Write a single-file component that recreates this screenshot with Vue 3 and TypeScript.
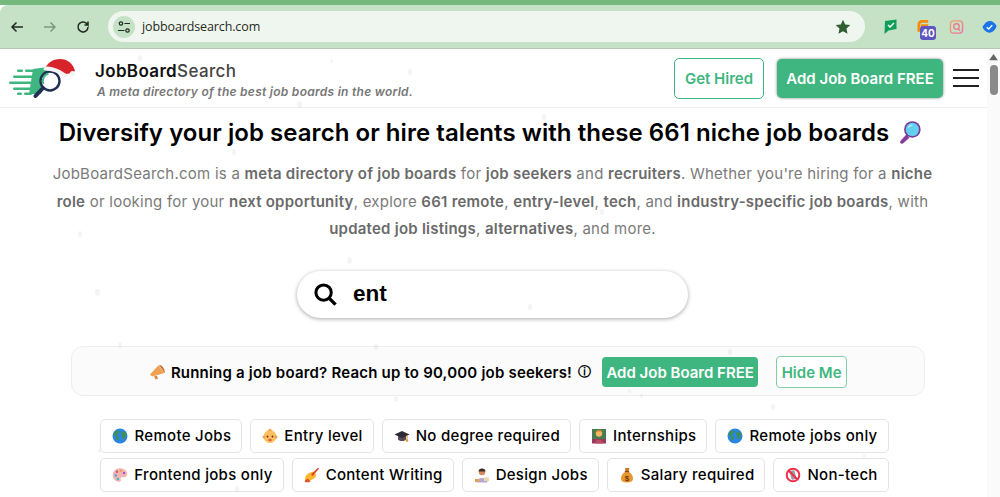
<template>
  <div class="screen">
    <svg class="defs" width="0" height="0" aria-hidden="true">
      <symbol id="globe" viewBox="0 0 16 16">
        <circle cx="8" cy="8" r="7.5" fill="#2a86e0" />
        <path d="M3 3.500c2-1.500 4-1 5-.5L7 5 5 5.500 5.500 8 7 9.500 6 13 4 11 3.500 8 1.500 7C1.500 6 2 4.500 3 3.500z" fill="#3f8f5a" />
        <path d="M10 4l3-.5 1.500 3-1 2-1.500 3-1.500-1-.5-3-1-1.500z" fill="#3f8f5a" />
      </symbol>
      <symbol id="baby" viewBox="0 0 16 16">
        <circle cx="8" cy="8.500" r="6.500" fill="#ffbf5f" />
        <circle cx="2" cy="9" r="1.500" fill="#f0a04a" />
        <circle cx="14" cy="9" r="1.500" fill="#f0a04a" />
        <path d="M6 2.500C7 .5 9 .5 10 2.500z" fill="#e8923a" />
        <circle cx="5.500" cy="8.500" r=".9" fill="#4a3020" />
        <circle cx="10.500" cy="8.500" r=".9" fill="#4a3020" />
        <ellipse cx="8" cy="12" rx="1.800" ry="1.200" fill="#e0604a" />
      </symbol>
      <symbol id="cap" viewBox="0 0 16 16">
        <path d="M4 8v3.500c2 2 6 2 8 0V8z" fill="#5a4a55" />
        <path d="M.5 6.500L8 3l7.500 3.500L8 10z" fill="#2e2a38" />
        <path d="M13 7.500v4" stroke="#d88a2a" stroke-width="1" />
        <circle cx="13" cy="12.500" r="1.200" fill="#e8902a" />
      </symbol>
      <symbol id="teacher" viewBox="0 0 16 16">
        <rect x="1" y="1" width="14" height="11" fill="#4a7a50" />
        <rect x="1" y="11" width="14" height="4.500" fill="#9a3a5a" />
        <circle cx="8" cy="5.500" r="3.200" fill="#f5b860" />
        <path d="M4.500 5.500C4.500 1 11.500 1 11.500 5.500L10 3.800H6z" fill="#d88a2a" />
        <path d="M4 15.500c0-5 8-5 8 0z" fill="#c04a6a" />
      </symbol>
      <symbol id="palette" viewBox="0 0 16 16">
        <path d="M8 1.200C3.500 1.200.8 4.500.8 8.200c0 4 3.500 6.800 6.700 6.600 2-.2 1.300-2 1-3-.2-1 .7-1.600 1.800-1.500 2.500.3 5-.5 5-3.300C15.300 3.800 12 1.200 8 1.200z" fill="#f5b5b0" />
        <circle cx="5" cy="4.800" r="1.200" fill="#d84a8a" />
        <circle cx="8.800" cy="3.800" r="1.100" fill="#e8a030" />
        <circle cx="12" cy="6" r="1.200" fill="#9a5ad0" />
        <circle cx="3.800" cy="8.500" r="1.200" fill="#38a8e0" />
        <circle cx="5.800" cy="12" r="1.200" fill="#40b8c0" />
      </symbol>
      <symbol id="write" viewBox="0 0 16 16">
        <path d="M1 12c0-3 2-5 4-6l4-1.500 3 2.500c.5 3-2 5-4 5.500L5 14.500H1z" fill="#ffb52e" />
        <path d="M.5 15c2 .5 5 .5 6-.5L4 11.500 1.500 13z" fill="#e0562a" />
        <path d="M7 7.500L14 .8l1 1L8.500 9z" fill="#d8402a" />
      </symbol>
      <symbol id="designer" viewBox="0 0 16 16">
        <circle cx="8" cy="5" r="3.200" fill="#d8885a" />
        <path d="M4.500 4.500C4.500.5 11.500.5 11.500 4.500z" fill="#3a2a2a" />
        <path d="M2.500 15.500c0-6 11-6 11 0z" fill="#b8a8d8" />
        <rect x="10" y="10.500" width="5" height="3.500" fill="#e8d8a8" />
        <rect x="1" y="12" width="4" height="3" fill="#e8a050" />
      </symbol>
      <symbol id="money" viewBox="0 0 16 16">
        <path d="M6 1h4.500L9.500 4.500h-3z" fill="#c87a2a" />
        <path d="M6 5C3 7 1.800 9.500 2 12c.2 2.500 2.500 3.500 6 3.500s5.800-1 6-3.500c.2-2.500-1-5-4-7z" fill="#e8962e" />
        <rect x="5.800" y="3.800" width="4.400" height="1.400" fill="#8a4a1a" />
        <text x="8" y="13.500" font-size="8" font-weight="700" text-anchor="middle" fill="#6a3a10" font-family="Liberation Sans, sans-serif">$</text>
      </symbol>
      <symbol id="nosign" viewBox="0 0 16 16">
        <rect x="5.500" y="3.500" width="5" height="9" rx="1" fill="#9a9aa5" transform="rotate(-15 8 8)" />
        <circle cx="8" cy="8" r="6.300" fill="none" stroke="#f0304a" stroke-width="2" />
        <path d="M3.500 3.500l9 9" stroke="#f0304a" stroke-width="2" />
      </symbol>
      <symbol id="horn" viewBox="0 0 16 16">
        <path d="M9.500 1.200L15.500 9 3 12.500 1 10.500z" fill="#f0a050" />
        <path d="M10 1l5.700 8c.4-1.500-.3-4-1.700-5.800C12.800 1.500 11 .6 10 1z" fill="#c8702a" />
        <path d="M5 12.500l1.500 3 2.500-.8L8 11.500z" fill="#d88a4a" />
      </symbol>
      <symbol id="lens" viewBox="0 0 20 22">
        <path d="M7 12L1.800 18c-.8 1 .8 2.800 2 2l5.700-5z" fill="#8a3a9a" />
        <circle cx="12" cy="8" r="7" fill="#7a3a9a" />
        <circle cx="12" cy="8" r="5.600" fill="#62d0ee" />
        <path d="M8.500 6.500c.8-1.500 2-2.200 3.500-2.300" stroke="#b8ecf8" stroke-width="1.200" fill="none" />
      </symbol>
    </svg>

    <div class="browser-top"></div>
    <div class="toolbar">
      <div class="nav">
        <svg class="nav-icon" viewBox="0 0 16 16"><path d="M14 8H3M7.500 3.500L3 8l4.500 4.500" fill="none" stroke="#1f2a20" stroke-width="1.500" /></svg>
        <svg class="nav-icon" viewBox="0 0 16 16"><path d="M2 8h11M8.500 3.500L13 8l-4.500 4.500" fill="none" stroke="#7b9a7e" stroke-width="1.500" /></svg>
        <svg class="nav-icon" viewBox="0 0 16 16"><path d="M13 8a5 5 0 1 1-1.500-3.600L13 6V2.500M13 6H9.500" fill="none" stroke="#1f2a20" stroke-width="1.500" /></svg>
      </div>
      <div class="omnibox">
        <span class="site-badge">
          <svg viewBox="0 0 14 14" width="14" height="14"><circle cx="4" cy="3.500" r="1.700" fill="none" stroke="#1f2a20" stroke-width="1.200" /><path d="M7.500 3.500H13M1 10.500h6.500" stroke="#1f2a20" stroke-width="1.200" /><circle cx="10.500" cy="10.500" r="1.700" fill="none" stroke="#1f2a20" stroke-width="1.200" /></svg>
        </span>
        <span class="url">jobboardsearch.com</span>
        <svg class="star" viewBox="0 0 16 16"><path d="M8 .8l2.200 4.700 5.100.6-3.800 3.500 1 5.100L8 12.200l-4.500 2.500 1-5.100L.7 6.100l5.100-.6z" fill="#2f5f30" /></svg>
      </div>
      <div class="extensions">
        <svg class="ext" viewBox="0 0 14 16"><path d="M1.500 2L13 .5v9.500l-8 1.500L1 15z" fill="#0f9d58" /><path d="M4.500 6l2 2 4-4" fill="none" stroke="#fff" stroke-width="1.500" /></svg>
        <span class="ext-orange">
          <svg class="ext" viewBox="0 0 16 16"><path d="M3 13V5.500C3 3 4.500 2 6.500 2H13M6.500 8V6.500H13" fill="none" stroke="#f58a0c" stroke-width="2.800" /></svg>
          <span class="badge">40</span>
        </span>
        <svg class="ext" viewBox="0 0 16 16"><defs><linearGradient id="insta" x1="0" y1="0" x2="1" y2="1"><stop offset="0" stop-color="#f5a565" /><stop offset="1" stop-color="#ee6fa5" /></linearGradient></defs><rect x="1.500" y="1.500" width="13" height="13" rx="3.500" fill="none" stroke="url(#insta)" stroke-width="1.500" /><circle cx="8" cy="7.500" r="3" fill="none" stroke="#ec7a90" stroke-width="1.400" /><path d="M10 10l1.800 2" stroke="#ec7a90" stroke-width="1.400" /></svg>
        <svg class="ext" viewBox="0 0 16 16"><path d="M0.500 8c2-4 4.500-6 7.500-6.500 3-.2 6 2 7.500 5.500-1 4-4 6.800-7.500 7C5 14 2 11.500.5 8z" fill="#1a73e8" /><path d="M5 8.200l2.200 2L11 6" fill="none" stroke="#fff" stroke-width="1.500" /></svg>
      </div>
    </div>

    <div class="page">
      <div class="page-main">
        <header class="site-header">
          <svg class="logo" viewBox="0 0 68 46">
            <g fill="#3fb67f">
              <path d="M25 14L40 12 33 39H21z" />
              <rect x="9" y="14.500" width="6" height="2.400" rx="1.200" />
              <rect x="17" y="14.500" width="10" height="2.400" rx="1.200" />
              <rect x="5" y="20.500" width="22" height="2.400" rx="1.200" />
              <rect x="1" y="26.500" width="24" height="2.400" rx="1.200" />
              <rect x="5" y="32.500" width="20" height="2.400" rx="1.200" />
              <rect x="9" y="37.500" width="5" height="2.400" rx="1.200" />
              <rect x="16" y="37.500" width="8" height="2.400" rx="1.200" />
            </g>
            <circle cx="42" cy="26" r="9.500" fill="#fff" stroke="#1e2f52" stroke-width="2.400" />
            <path d="M35.500 29a7.500 7.500 0 0 1 5-10.500" fill="none" stroke="#3fb67f" stroke-width="2" />
            <path d="M35 33L27.500 41" stroke="#1e2f52" stroke-width="4" stroke-linecap="round" />
            <path d="M37 14C39 8 45 4 52 4c7 0 13 4 15 12l-3 2-6 1C52 16 44 14 37 14z" fill="#d8232a" />
            <path d="M35.500 14.500C35.500 12.500 37 11.500 39 11.500c7 .5 14 3.500 20 8 1 1.500-.5 3.500-2.500 2.500-6-4-13-6.500-19-6.500-1 0-2-.5-2-1z" fill="#f3f3f3" />
            <circle cx="64.500" cy="18.500" r="2.600" fill="#f3f3f3" />
          </svg>
          <div class="brand">
            <div class="brand-name">JobBoard<span>Search</span></div>
            <div class="brand-sub">A meta directory of the best job boards in the world.</div>
          </div>
          <div class="header-actions">
            <button class="btn-outline">Get Hired</button>
            <button class="btn-solid">Add Job Board FREE</button>
            <div class="burger"><i></i><i></i><i></i></div>
          </div>
        </header>

        <main class="content">
          <h1>
            Diversify your job search or hire talents with these 661 niche job boards
            <svg class="lens"><use href="#lens" /></svg>
          </h1>
          <p class="intro">
            JobBoardSearch.com is a <b>meta directory of job boards</b> for <b>job seekers</b> and <b>recruiters</b>. Whether you're hiring for a <b>niche role</b> or looking for your <b>next opportunity</b>, explore <b>661 remote</b>, <b>entry-level</b>, <b>tech</b>, and <b>industry-specific job boards</b>, with <b>updated job listings</b>, <b>alternatives</b>, and more.
          </p>

          <div class="search">
            <svg class="search-icon" viewBox="0 0 24 24"><circle cx="10" cy="10" r="8" fill="none" stroke="#000" stroke-width="3.200" /><path d="M16 16l6.500 6.500" stroke="#000" stroke-width="3.500" /></svg>
            <span>ent</span>
          </div>

          <div class="banner">
            <svg class="chip-icon"><use href="#horn" /></svg>
            <span class="banner-text">Running a job board? Reach up to 90,000 job seekers!</span>
            <span class="info">ⓘ</span>
            <button class="banner-add">Add Job Board FREE</button>
            <button class="banner-hide">Hide Me</button>
          </div>

          <div class="chips">
            <div v-for="chip in chips" :key="chip.label" class="chip">
              <svg class="chip-icon"><use :href="'#' + chip.icon" /></svg>
              {{ chip.label }}
            </div>
          </div>
        </main>

        <span
          v-for="(f, i) in flakes"
          :key="i"
          class="flake"
          :style="{ left: f[0] + 'px', top: f[1] + 'px', width: f[2] + 'px', height: f[2] * 1.400 + 'px' }"
        ></span>
      </div>
      <div class="scrollbar">
        <svg viewBox="0 0 10 8" width="9" height="7"><path d="M5 0l5 7H0z" fill="#666" /></svg>
        <div class="thumb"></div>
      </div>
    </div>
  </div>
</template>

<script setup lang="ts">
const chips = [
  { icon: 'globe', label: 'Remote Jobs' },
  { icon: 'baby', label: 'Entry level' },
  { icon: 'cap', label: 'No degree required' },
  { icon: 'teacher', label: 'Internships' },
  { icon: 'globe', label: 'Remote jobs only' },
  { icon: 'palette', label: 'Frontend jobs only' },
  { icon: 'write', label: 'Content Writing' },
  { icon: 'designer', label: 'Design Jobs' },
  { icon: 'money', label: 'Salary required' },
  { icon: 'nosign', label: 'Non-tech' }
]

// falling snow over the page: x, y (relative to the page area), size
const flakes: number[][] = [
  [138, 6, 4], [297, 52, 5], [232, 100, 4], [330, 10, 3], [342, 150, 4], [600, 160, 4], [408, 20, 4],
  [542, 65, 4], [690, 82, 4], [240, 145, 3], [78, 182, 4], [428, 170, 3], [528, 255, 4], [347, 208, 5],
  [95, 240, 5], [118, 293, 4], [176, 320, 4], [374, 295, 4], [728, 300, 4], [656, 325, 5], [628, 340, 3],
  [394, 347, 4], [204, 385, 4], [640, 345, 3], [771, 355, 4], [98, 400, 3], [863, 405, 3], [235, 437, 4]
]
</script>

<style>
html,
body {
  margin: 0;
  overflow: hidden;
}
</style>

<style scoped>
.screen {
  width: 1000px;
  height: 497px;
  overflow: hidden;
  display: flex;
  flex-direction: column;
  font-family: 'Inter', 'Liberation Sans', sans-serif;
  background: #fff;
  color: #000;
}

.defs {
  position: absolute;
}

.browser-top {
  height: 5px;
  background: #76b97e;
  flex-shrink: 0;
}

.toolbar {
  height: 44px;
  flex-shrink: 0;
  box-sizing: border-box;
  background: #c5e1c6;
  border-top-left-radius: 8px;
  border-bottom: 1px solid #b5c8b6;
  display: flex;
  align-items: center;
  padding: 0 0 0 9px;
}

.nav {
  display: flex;
  gap: 17px;
  width: 99px;
}

.nav-icon {
  width: 16px;
  height: 16px;
}

.omnibox {
  width: 757px;
  height: 31px;
  background: #eff6ef;
  border-radius: 16px;
  display: flex;
  align-items: center;
  padding: 0 14px 0 5px;
  box-sizing: border-box;
}

.site-badge {
  width: 22px;
  height: 22px;
  border-radius: 50%;
  background: #c5e1c6;
  display: flex;
  align-items: center;
  justify-content: center;
}

.url {
  margin-left: 7px;
  font-family: 'Open Sans', sans-serif;
  font-size: 12.5px;
  letter-spacing: -0.12px;
  color: #1f2a20;
  flex: 1;
}

.star {
  width: 16px;
  height: 16px;
}

.extensions {
  display: flex;
  align-items: center;
  gap: 18px;
  margin-left: 18px;
}

.ext {
  width: 15px;
  height: 16px;
  display: block;
}

.ext-orange {
  position: relative;
}

.badge {
  position: absolute;
  left: 4px;
  top: 7px;
  width: 16px;
  height: 14px;
  border-radius: 3px;
  background: #5d56c0;
  color: #fff;
  font-size: 10px;
  font-weight: 700;
  text-align: center;
  line-height: 14px;
}

.page {
  flex: 1;
  display: flex;
  min-height: 0;
}

.page-main {
  flex: 1;
  position: relative;
  min-width: 0;
}

.site-header {
  height: 59px;
  box-sizing: border-box;
  border-bottom: 1px solid #f0f0f0;
  display: flex;
  align-items: center;
  padding: 0 8px 0 8px;
}

.logo {
  width: 68px;
  height: 46px;
  flex-shrink: 0;
}

.brand {
  margin: 3px 0 0 19px;
}

.brand-name {
  font-size: 17px;
  font-weight: 600;
  line-height: 20px;
  letter-spacing: 0.35px;
  color: #111;
}

.brand-name span {
  font-weight: 500;
  color: #444;
}

.brand-sub {
  margin: 3px 0 0 2px;
  font-size: 12px;
  font-weight: 600;
  font-style: italic;
  letter-spacing: 0.27px;
  color: #777;
  line-height: 15px;
}

.header-actions {
  margin-left: auto;
  display: flex;
  align-items: center;
}

button {
  font-family: inherit;
  cursor: pointer;
}

.btn-outline {
  width: 90px;
  height: 41px;
  background: #fff;
  border: 1px solid #3fb67f;
  border-radius: 5px;
  color: #3fb67f;
  font-size: 15px;
  font-weight: 600;
  padding: 0;
}

.btn-solid {
  width: 166px;
  height: 39px;
  margin-left: 13px;
  background: #3fb67f;
  border: none;
  border-radius: 5px;
  box-shadow: 0 0 3px rgba(0, 0, 0, 0.5);
  color: #fff;
  font-size: 15px;
  font-weight: 600;
  padding: 0;
}

.burger {
  margin-left: 10px;
  width: 26px;
  display: flex;
  flex-direction: column;
  gap: 6px;
}

.burger i {
  display: block;
  height: 2px;
  background: #222;
}

.content {
  display: flex;
  flex-direction: column;
  align-items: center;
}

h1 {
  margin: 9px 6px 0 0;
  font-size: 24px;
  line-height: 32px;
  font-weight: 600;
  letter-spacing: 0.05px;
  white-space: nowrap;
  display: flex;
  align-items: center;
  gap: 9px;
}

.lens {
  width: 24px;
  height: 26px;
}

.intro {
  margin: 11px 0 0 -2px;
  width: 884px;
  text-align: center;
  font-size: 15px;
  letter-spacing: 0.24px;
  line-height: 27.500px;
  color: #7a7a7a;
}

.intro b {
  font-weight: 600;
  color: #6a6a6a;
}

.search {
  margin-top: 28px;
  width: 391px;
  height: 47px;
  margin-left: -2px;
  box-sizing: border-box;
  border-radius: 24px;
  background: #fff;
  box-shadow: 0 1px 4px rgba(0, 0, 0, 0.35);
  display: flex;
  align-items: center;
  padding-left: 17px;
  gap: 16px;
  font-family: 'Liberation Sans', sans-serif;
  font-size: 22.500px;
  font-weight: 700;
}

.search-icon {
  width: 23px;
  height: 23px;
}

.banner {
  margin: 28px 0 0 9px;
  width: 854px;
  height: 50px;
  box-sizing: border-box;
  padding-top: 3px;
  border: 1px solid #eeeeee;
  border-radius: 12px;
  background: #fbfbfb;
  display: flex;
  align-items: center;
  justify-content: center;
  font-size: 15px;
  font-weight: 600;
}

.banner-text {
  margin-left: 6px;
  letter-spacing: 0.2px;
}

.info {
  margin-left: 6px;
  font-family: 'DejaVu Sans', sans-serif;
  font-weight: 700;
  font-size: 13px;
  color: #000;
}

.banner-add {
  margin-left: 11px;
  width: 156px;
  height: 30px;
  background: #3fb67f;
  border: none;
  border-radius: 4px;
  color: #fff;
  font-size: 15px;
  font-weight: 600;
  padding: 0;
}

.banner-hide {
  margin-left: 18px;
  width: 71px;
  height: 32px;
  background: #fff;
  border: 1px solid #7fcfa8;
  border-radius: 4px;
  color: #3fb67f;
  font-size: 15px;
  font-weight: 600;
  padding: 0;
}

.chips {
  margin: 23px 0 0 2px;
  width: 800px;
  display: flex;
  flex-wrap: wrap;
  justify-content: center;
  gap: 5px 8px;
}

.chip {
  height: 34px;
  box-sizing: border-box;
  border: 1px solid #e4e4e4;
  border-radius: 5px;
  background: #fff;
  display: flex;
  align-items: center;
  gap: 6px;
  padding: 0 10px 0 11px;
  font-size: 15px;
  font-weight: 500;
  letter-spacing: 0.3px;
  white-space: nowrap;
}

.chip-icon {
  width: 16px;
  height: 16px;
  flex-shrink: 0;
}

.flake {
  position: absolute;
  border-radius: 50%;
  background: rgba(150, 150, 150, 0.1);
  pointer-events: none;
}

.scrollbar {
  width: 13px;
  flex-shrink: 0;
  background: #fafafa;
  display: flex;
  flex-direction: column;
  align-items: center;
  padding-top: 5px;
  box-sizing: border-box;
}

.thumb {
  margin-top: 4px;
  width: 8px;
  height: 30px;
  border-radius: 4px;
  background: #8a8a8a;
}
</style>
